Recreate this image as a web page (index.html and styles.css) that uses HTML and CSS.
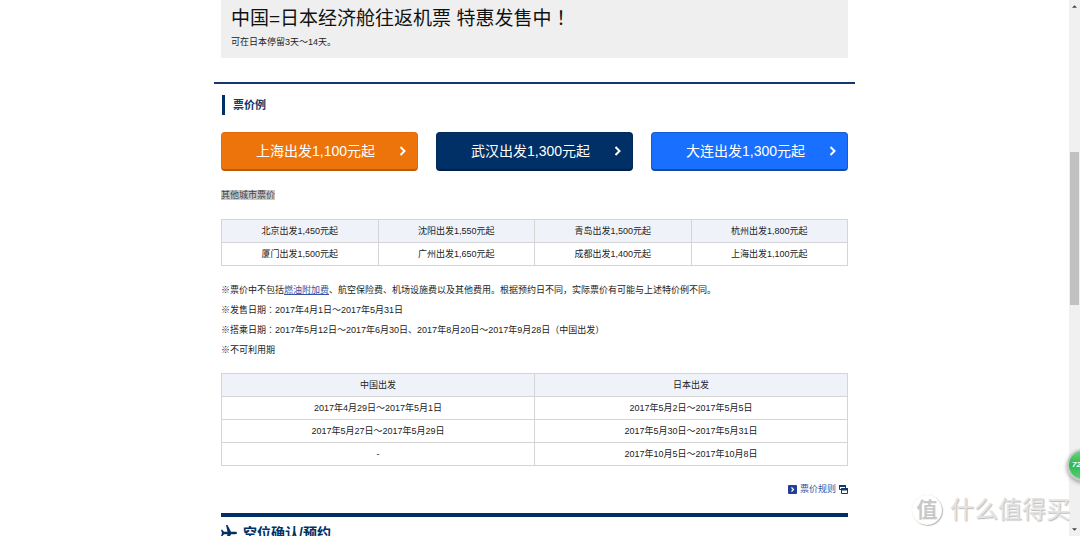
FILE: index.html
```html
<!DOCTYPE html>
<html lang="zh-CN">
<head>
<meta charset="utf-8">
<title>中国=日本经济舱往返机票</title>
<link rel="stylesheet" href="styles.css">
</head>
<body>
<div class="viewport">
  <main class="page">
    <div class="content">
      <header class="hero">
        <h1 class="hero-title">中国=日本经济舱往返机票 特惠发售中<span class="mid" lang="zh-TW">！</span></h1>
        <p class="hero-note">可在日本停留3天～14天。</p>
      </header>
      <section class="fares">
        <h2 class="section-title">票价例</h2>
        <nav class="buttons">
          <a class="fare-button orange" href="#shanghai"><span>上海出发1,100元起</span><svg class="chevron" viewBox="0 0 8 10"><path d="M1.5 1l4 4-4 4"/></svg></a>
          <a class="fare-button navy" href="#wuhan"><span>武汉出发1,300元起</span><svg class="chevron" viewBox="0 0 8 10"><path d="M1.5 1l4 4-4 4"/></svg></a>
          <a class="fare-button blue" href="#dalian"><span>大连出发1,300元起</span><svg class="chevron" viewBox="0 0 8 10"><path d="M1.5 1l4 4-4 4"/></svg></a>
        </nav>
        <p class="other"><mark>其他城市票价</mark></p>
        <table class="grid">
          <tr class="tint"><td>北京出发1,450元起</td><td>沈阳出发1,550元起</td><td>青岛出发1,500元起</td><td>杭州出发1,800元起</td></tr>
          <tr><td>厦门出发1,500元起</td><td>广州出发1,650元起</td><td>成都出发1,400元起</td><td>上海出发1,100元起</td></tr>
        </table>
        <div class="notes">
          <p>※票价中不包括<a href="#fuel">燃油附加费</a>、航空保险费、机场设施费以及其他费用。根据预约日不同，实际票价有可能与上述特价例不同。</p>
          <p>※发售日期<span class="mid" lang="zh-TW">：</span>2017年4月1日～2017年5月31日</p>
          <p>※搭乘日期<span class="mid" lang="zh-TW">：</span>2017年5月12日～2017年6月30日、2017年8月20日～2017年9月28日（中国出发）</p>
          <p>※不可利用期</p>
        </div>
        <table class="grid">
          <tr class="tint"><th>中国出发</th><th>日本出发</th></tr>
          <tr><td>2017年4月29日～2017年5月1日</td><td>2017年5月2日～2017年5月5日</td></tr>
          <tr><td>2017年5月27日～2017年5月29日</td><td>2017年5月30日～2017年5月31日</td></tr>
          <tr><td>-</td><td>2017年10月5日～2017年10月8日</td></tr>
        </table>
        <a class="rules" href="#rules">
          <svg class="rules-icon" viewBox="0 0 9 9"><rect width="9" height="9" rx="1" fill="#203f9a"/><path d="M3.5 2.5l2 2-2 2" fill="none" stroke="#fff" stroke-width="1.2"/></svg>
          <span>票价规则</span>
          <svg class="rules-icon" viewBox="0 0 9 9"><path d="M.5 .5h6v4h-6z" fill="#fff" stroke="#12396d"/><path d="M0 0h7v2H0z" fill="#12396d"/><path d="M2.500 3.500h6v5h-6z" fill="#fff" stroke="#12396d"/><path d="M2 3h7v2.500H2z" fill="#12396d"/></svg>
        </a>
      </section>
      <section class="booking">
        <h2 class="booking-title"><svg class="plane" viewBox="0 0 16 16"><path d="M16 8c0-.8-.8-1.200-2-1.200H10L6.500 0H5l1.500 6.800H3L1.300 4.700H0L1 8l-1 3.300h1.300L3 9.200h3.500L5 16h1.500L10 9.200h4c1.200 0 2-.4 2-1.200z"/></svg><span>空位确认/预约</span></h2>
      </section>
    </div>
  </main>
  <div class="scrollbar">
    <svg class="arrow" viewBox="0 0 6 3"><path d="M0 3l3-3 3 3z"/></svg>
    <div class="track"><div class="thumb"></div></div>
    <svg class="arrow" viewBox="0 0 6 3"><path d="M0 0h6L3 3z"/></svg>
  </div>
  <div class="watermark"><span class="seal">值</span><span>什么值得买</span></div>
  <div class="badge">72</div>
</div>
</body>
</html>
```

FILE: styles.css
```css
* { box-sizing: border-box; }
body, h1, h2, p { margin: 0; }
body {
  background: #fff;
  color: #222;
  font: 9px/20px "Liberation Sans", "Noto Sans CJK SC", sans-serif;
}
.viewport {
  position: relative;
  display: grid;
  grid-template-columns: 1fr 11px;
  height: 100vh;
  overflow: hidden;
}
.page { min-height: 0; overflow: hidden; }
.content { max-width: 641px; margin: 0 auto; }
.mid { font-family: "Noto Sans CJK TC", sans-serif; line-height: 1; }
.hero {
  margin: 0 7px 24px;
  padding: 6px 10px;
  background: #efefef;
}
.hero-title { color: #111; font-size: 19px; font-weight: 400; line-height: 26px; }
.fares { border-top: 2px solid #12396d; padding: 11px 7px 14px; }
.section-title {
  margin: 0 1px 17px;
  padding-left: 8px;
  border-left: 3px solid #003066;
  color: #12396d;
  font-size: 11px;
  line-height: 20px;
}
.buttons { display: grid; grid-template-columns: repeat(3, 1fr); gap: 18px; }
.fare-button {
  display: flex;
  align-items: center;
  padding: 0 10px;
  height: 39px;
  border-radius: 4px;
  color: #fff;
  font-size: 14px;
  text-decoration: none;
  text-align: center;
}
.fare-button span { flex: 1; }
.orange { background: #ed740b; border: 1px solid #e06c08; border-bottom: 2px solid #b9590a; }
.navy { background: #003066; border: 1px solid #002b5c; border-bottom: 2px solid #001f49; }
.blue { background: #196fff; border: 1px solid #155bd2; border-bottom: 2px solid #164a9f; }
.chevron { width: 8px; height: 10px; fill: none; stroke: #fff; stroke-width: 2; }
.other { padding: 14px 0; }
.other mark { background: #c8c8c8; color: #444; }
.grid { width: 100%; table-layout: fixed; border-collapse: collapse; }
.grid td, .grid th {
  height: 23px;
  padding: 0;
  border: 1px solid #d5d5d5;
  font-weight: 400;
  line-height: 20px;
  text-align: center;
}
.tint { background: #eff3f9; }
.notes { padding: 14px 0 13px; }
.notes a { color: #3552a4; }
.rules {
  display: flex;
  justify-content: flex-end;
  align-items: center;
  gap: 3px;
  padding-top: 13px;
  color: #3552a4;
  text-decoration: none;
}
.rules-icon { width: 9px; height: 9px; }
.booking { margin: 0 7px; border-top: 4px solid #003066; }
.booking-title {
  display: flex;
  align-items: center;
  gap: 6px;
  padding-top: 6px;
  color: #003066;
  font-size: 14px;
  line-height: 20px;
}
.plane { width: 16px; height: 16px; fill: #003066; }
.scrollbar {
  display: flex;
  flex-direction: column;
  align-items: center;
  padding: 5px 1px;
  background: #f0f0f0;
}
.arrow { width: 5px; height: 3px; fill: #444; }
.track { flex: 1; width: 100%; padding: 144px 0 0; }
.thumb { height: 153px; background: #c1c1c1; }
.watermark {
  position: absolute;
  right: 10px;
  bottom: 10px;
  display: flex;
  align-items: center;
  gap: 8px;
  color: #e4e4e4;
  font-size: 24px;
  line-height: 32px;
  text-shadow: 1px 1px 1px #bbb;
}
.seal {
  width: 30px;
  height: 30px;
  border-radius: 50%;
  box-shadow: 1px 1px 1px #bbb, 0 0 1px #ddd;
  color: #c8c8c8;
  font-size: 21px;
  font-weight: 700;
  line-height: 30px;
  text-align: center;
  text-shadow: none;
}
.badge {
  position: absolute;
  right: -19px;
  bottom: 55px;
  width: 32px;
  height: 32px;
  padding-left: 3px;
  border: 2px solid #c3c9c5;
  border-radius: 50%;
  background: linear-gradient(#6ad27a, #2fb653 50%, #52d46c);
  box-shadow: 0 2px 4px #999;
  color: #fff;
  font-size: 8px;
  font-style: italic;
  font-weight: 700;
  line-height: 28px;
}
```
